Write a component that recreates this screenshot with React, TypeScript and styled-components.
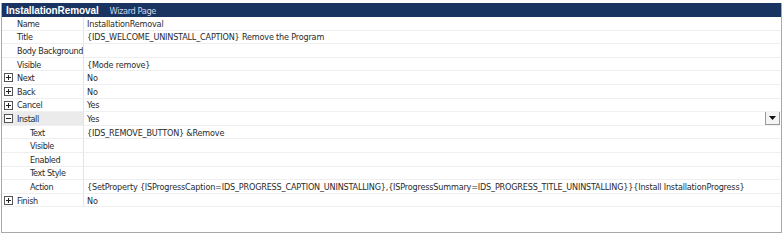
import React from 'react'
import styled, { createGlobalStyle } from 'styled-components'

const Global = createGlobalStyle`
    body {
        margin: 0;
        background: #fff;
        font-family: "DejaVu Sans Condensed", "DejaVu Sans", sans-serif;
        font-size: 9px;
        letter-spacing: -0.18px;
        color: #2a2a2a;
    }
`

const Frame = styled.div`
    width: 784px;
    height: 247px;
    padding: 3px 2px 0 1px;
    box-sizing: border-box;
`

const Grid = styled.div`
    height: 230px;
    border: 1px solid #a9a9a9;
    border-top: none;
    box-sizing: border-box;
    background: #fff;
`

const Header = styled.div`
    height: 14px;
    background: #193461;
    display: flex;
    align-items: center;
    padding-left: 4px;
    gap: 11px;
    white-space: nowrap;
`

const HeaderTitle = styled.span`
    color: #fff;
    font-family: "Liberation Sans", Arial, sans-serif;
    font-weight: bold;
    font-size: 10px;
    letter-spacing: -0.1px;
`

const HeaderType = styled.span`
    color: #c9d7ee;
    font-size: 9.2px;
    letter-spacing: -0.4px;
`

const Row = styled.div`
    height: 13.6px;
    display: grid;
    grid-template-columns: 82px 1fr;
    border-bottom: 1px solid #efefef;
    box-sizing: border-box;
    line-height: 12px;
    white-space: nowrap;
`

const Label = styled.div<{ depth: number; selected?: boolean }>`
    display: flex;
    align-items: center;
    padding: 1px 0 0 ${p => (p.depth === 2 ? 28 : 15)}px;
    position: relative;
    background: ${p => (p.selected ? '#ebebeb' : '#fff')};
    border-right: 1px solid #e4e4e4;
    letter-spacing: -0.35px;
    overflow: hidden;
`

const Value = styled.div`
    display: flex;
    align-items: center;
    padding: 1px 0 0 3px;
    position: relative;
    overflow: hidden;
`

const Expander = styled.span`
    position: absolute;
    left: 2px;
    top: 2px;
    width: 7px;
    height: 7px;
    border: 1px solid #555;
    background: #fff;
`

const DropButton = styled.span`
    position: absolute;
    right: 1px;
    top: -1px;
    width: 13px;
    height: 12px;
    border: 1px solid #999;
    background: #f4f4f4;
    display: flex;
    align-items: center;
    justify-content: center;
`

const Sign = ({ open }: { open: boolean }) => (
    <Expander>
        <svg width="7" height="7" viewBox="0 0 7 7" style={{ display: 'block' }}>
            <rect x="1" y="3" width="5" height="1" fill="#222" />
            {!open && <rect x="3" y="1" width="1" height="5" fill="#222" />}
        </svg>
    </Expander>
)

type Prop = {
    name: string
    value: string
    depth?: number
    expand?: 'open' | 'closed'
    selected?: boolean
}

const rows: Prop[] = [
    { name: 'Name', value: 'InstallationRemoval' },
    { name: 'Title', value: '{IDS_WELCOME_UNINSTALL_CAPTION} Remove the Program' },
    { name: 'Body Background', value: '' },
    { name: 'Visible', value: '{Mode remove}' },
    { name: 'Next', value: 'No', expand: 'closed' },
    { name: 'Back', value: 'No', expand: 'closed' },
    { name: 'Cancel', value: 'Yes', expand: 'closed' },
    { name: 'Install', value: 'Yes', expand: 'open', selected: true },
    { name: 'Text', value: '{IDS_REMOVE_BUTTON} &Remove', depth: 2 },
    { name: 'Visible', value: '', depth: 2 },
    { name: 'Enabled', value: '', depth: 2 },
    { name: 'Text Style', value: '', depth: 2 },
    {
        name: 'Action',
        value:
            '{SetProperty {ISProgressCaption=IDS_PROGRESS_CAPTION_UNINSTALLING},{ISProgressSummary=IDS_PROGRESS_TITLE_UNINSTALLING}}{Install InstallationProgress}',
        depth: 2,
    },
    { name: 'Finish', value: 'No', expand: 'closed' },
]

const App = () => {
    return (
        <Frame>
            <Global />
            <Grid>
                <Header>
                    <HeaderTitle>InstallationRemoval</HeaderTitle>
                    <HeaderType>Wizard Page</HeaderType>
                </Header>
                {rows.map((r, i) => (
                    <Row key={i}>
                        <Label depth={r.depth || 1} selected={r.selected}>
                            {r.expand && <Sign open={r.expand === 'open'} />}
                            {r.name}
                        </Label>
                        <Value>
                            {r.value}
                            {r.selected && (
                                <DropButton>
                                    <svg width="7" height="4" viewBox="0 0 7 4">
                                        <polygon points="0,0 7,0 3.5,4" fill="#111" />
                                    </svg>
                                </DropButton>
                            )}
                        </Value>
                    </Row>
                ))}
            </Grid>
        </Frame>
    )
}

export default App
